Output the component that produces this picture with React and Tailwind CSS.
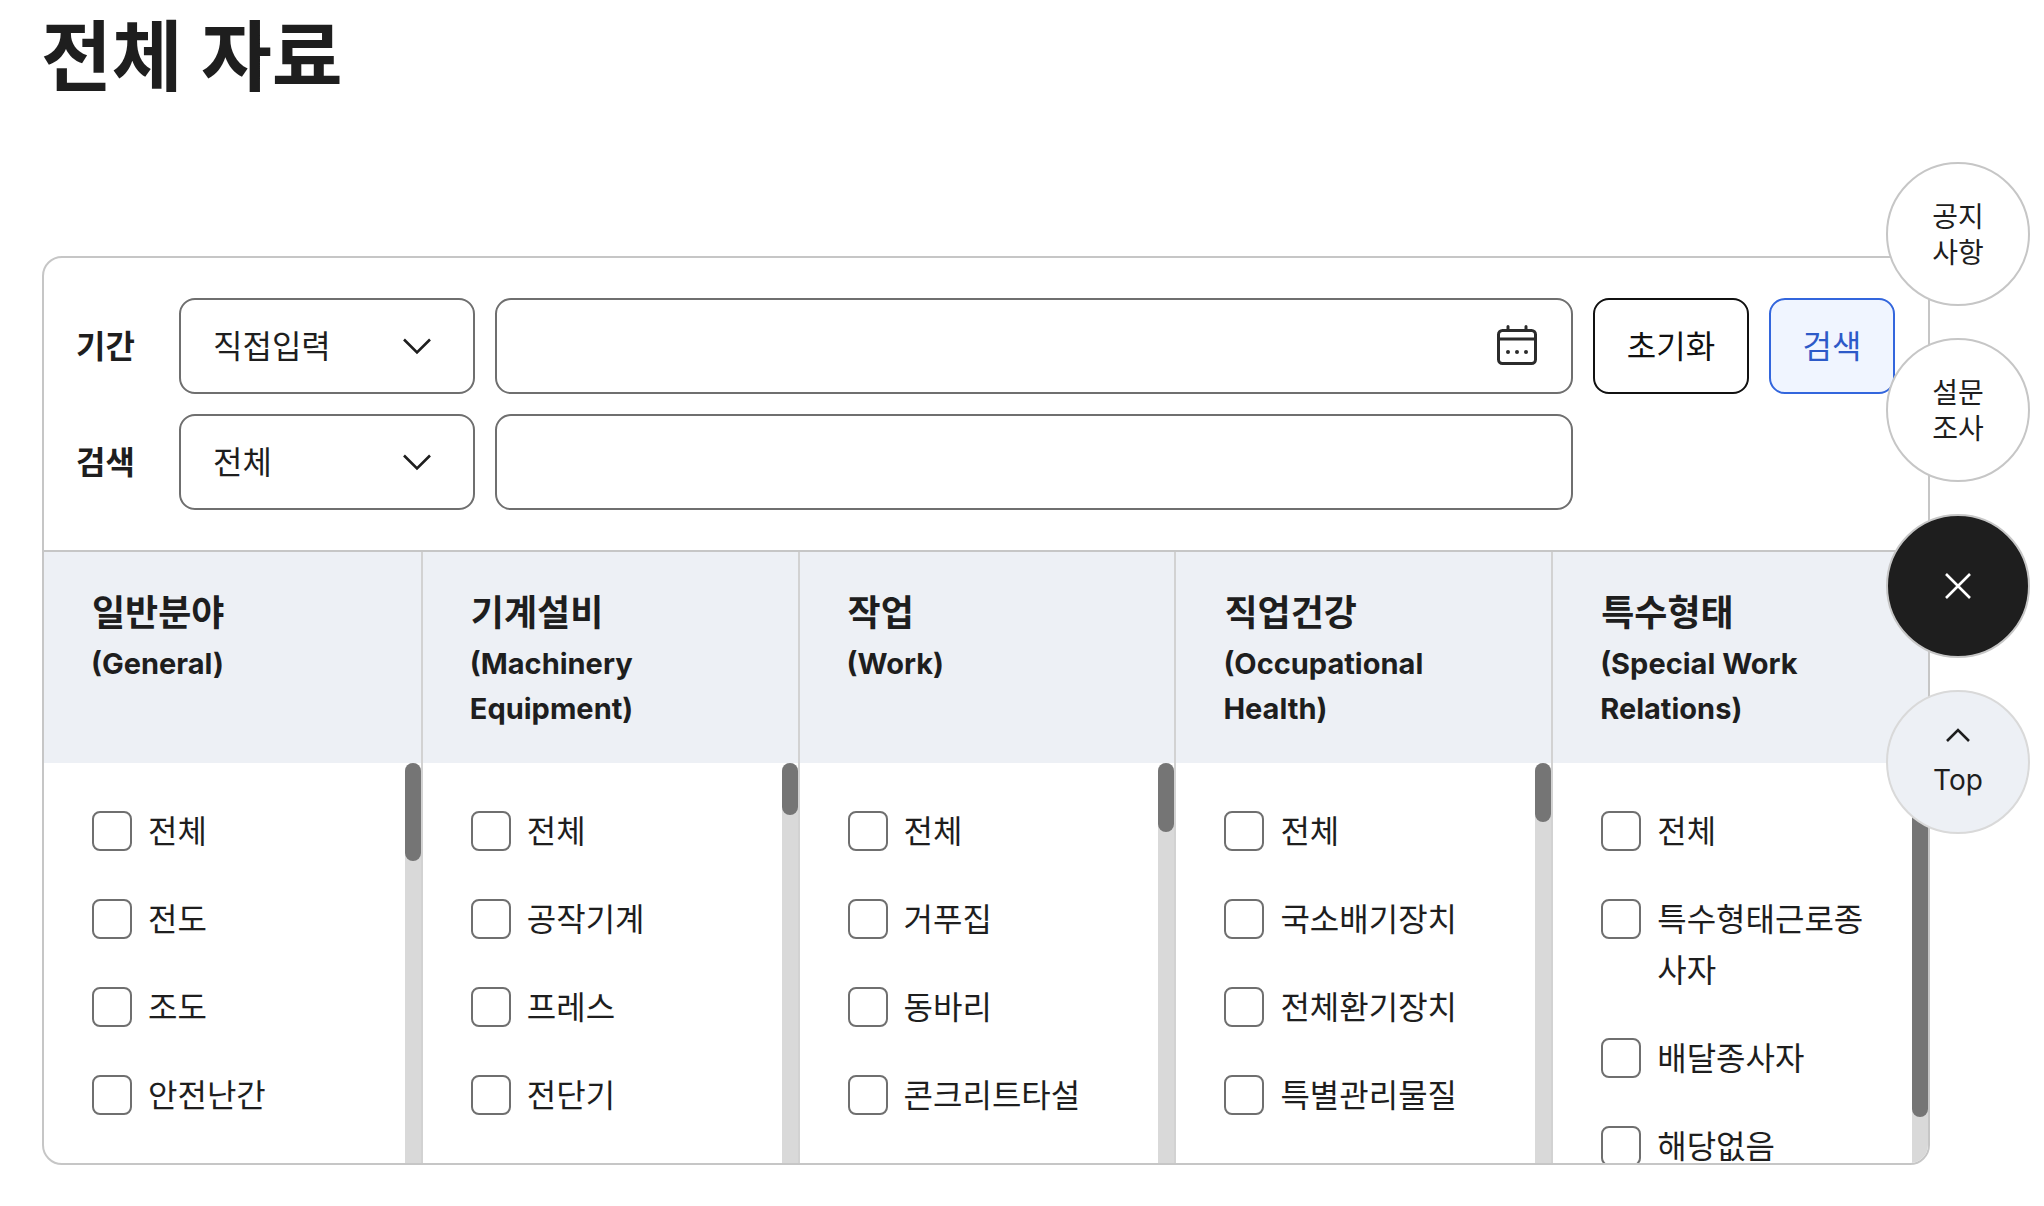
import React from "react";

const columns = [
  { t: "일반분야", s: "(General)", items: ["전체", "전도", "조도", "안전난간"], thumb: "h-[98px]" },
  { t: "기계설비", s: "(Machinery Equipment)", items: ["전체", "공작기계", "프레스", "전단기"], thumb: "h-[52px]" },
  { t: "작업", s: "(Work)", items: ["전체", "거푸집", "동바리", "콘크리트타설"], thumb: "h-[69px]" },
  { t: "직업건강", s: "(Occupational Health)", items: ["전체", "국소배기장치", "전체환기장치", "특별관리물질"], thumb: "h-[59px]" },
  { t: "특수형태", s: "(Special Work Relations)", items: ["전체", "특수형태근로종사자", "배달종사자", "해당없음"], thumb: "h-[354px]" },
];

function Chevron() {
  return (
    <svg width="30" height="18" viewBox="0 0 30 18" fill="none" stroke="#1e1e1e" strokeWidth="2.6" className="shrink-0">
      <path d="M2 2.5 L15 15.5 L28 2.5" />
    </svg>
  );
}

function Select({ label }) {
  return (
    <div className="flex h-[96px] w-[296px] shrink-0 items-center justify-between rounded-[16px] border-2 border-[#6f6f6f] bg-white pl-[32px] pr-[41px] text-[32px] text-[#1e1e1e]">
      <span className="pt-[2px]">{label}</span>
      <Chevron />
    </div>
  );
}

function Column({ col, first }) {
  return (
    <div className={`relative flex min-w-0 flex-col ${first ? "" : "border-l-2 border-[#d2d2d2]"}`}>
      <div className="h-[211px] shrink-0 bg-[#edf0f5] pl-[48px] pr-[40px] pt-[33px] text-[#1e1e1e]">
        <div className="text-[36px] font-bold leading-[56px]">{col.t}</div>
        <div className="-ml-[1px] text-[29px] font-bold leading-[45px]">{col.s}</div>
      </div>
      <div className="relative min-h-0 flex-1 overflow-hidden">
        <ul className="flex flex-col gap-[37px] pl-[48px] pr-[46px] pt-[43px]">
          {col.items.map((it) => (
            <li key={it} className="flex items-start gap-[16px]">
              <span className="mt-[5px] h-[40px] w-[40px] shrink-0 rounded-[8px] border-2 border-[#6f6f6f] bg-white" />
              <span className="text-[32px] leading-[51px] text-[#1e1e1e]">{it}</span>
            </li>
          ))}
        </ul>
        <div className="absolute bottom-0 right-0 top-0 w-[16px] rounded-full bg-[#d9d9d9]">
          <div className={`w-[16px] rounded-full bg-[#757575] ${col.thumb}`} />
        </div>
      </div>
    </div>
  );
}

function Circle({ children, className }) {
  return (
    <button className={`flex h-[144px] w-[144px] flex-col items-center justify-center rounded-full border-2 text-[28px] leading-[36px] ${className}`}>
      {children}
    </button>
  );
}

export default function App() {
  return (
    <div className="relative h-[1206px] overflow-hidden bg-white pl-[42px] font-['Inter','Noto_Sans_CJK_KR',sans-serif] text-[#1e1e1e]">
      <h1 className="-ml-[1px] h-[256px] pt-[9px] text-[77px] font-bold leading-[96px]">전체 자료</h1>
      <div className="flex h-[909px] w-[1888px] flex-col overflow-hidden rounded-[20px] border-2 border-[#c6c6c6]">
        <div className="flex shrink-0 flex-col gap-[20px] border-b-2 border-[#c6c6c6] pb-[40px] pl-[32px] pt-[40px]">
          <div className="flex items-center gap-[20px]">
            <div className="-mr-[20px] w-[103px] shrink-0 pt-[2px] text-[32px] font-bold">기간</div>
            <Select label="직접입력" />
            <div className="flex h-[96px] w-[1078px] shrink-0 items-center justify-end rounded-[16px] border-2 border-[#6f6f6f] bg-white pr-[33px]">
              <svg width="42" height="42" viewBox="0 0 42 42" fill="none" stroke="#2b2b2b" strokeWidth="3">
                <rect x="2.5" y="5.5" width="37" height="33" rx="4" />
                <path d="M2.5 14 H39.5" />
                <path d="M12 1.5 V5 M30 1.5 V5" strokeLinecap="round" />
                <circle cx="12" cy="27" r="2" fill="#2b2b2b" stroke="none" />
                <circle cx="21" cy="27" r="2" fill="#2b2b2b" stroke="none" />
                <circle cx="30" cy="27" r="2" fill="#2b2b2b" stroke="none" />
              </svg>
            </div>
            <button className="h-[96px] w-[156px] shrink-0 rounded-[16px] border-2 border-[#111111] bg-white pt-[2px] text-[32px] text-[#111111]">초기화</button>
            <button className="h-[96px] w-[126px] shrink-0 rounded-[16px] border-2 border-[#3366dd] bg-[#f0f5ff] pt-[2px] text-[32px] text-[#2d5ac8]">검색</button>
          </div>
          <div className="flex items-center gap-[20px]">
            <div className="-mr-[20px] w-[103px] shrink-0 pt-[2px] text-[32px] font-bold">검색</div>
            <Select label="전체" />
            <div className="h-[96px] w-[1078px] shrink-0 rounded-[16px] border-2 border-[#6f6f6f] bg-white" />
          </div>
        </div>
        <div className="grid min-h-0 flex-1 grid-cols-5">
          {columns.map((c, i) => (
            <Column key={c.t} col={c} first={i === 0} />
          ))}
        </div>
      </div>

      <div className="absolute right-[14px] top-[162px] flex flex-col gap-[32px]">
        <Circle className="border-[#c6c6c6] bg-white pt-[2px]"><span>공지</span><span>사항</span></Circle>
        <Circle className="border-[#c6c6c6] bg-white pt-[2px]"><span>설문</span><span>조사</span></Circle>
        <Circle className="border-[#c6c6c6] bg-[#1e1e1e]">
          <svg width="30" height="30" viewBox="0 0 30 30" fill="none" stroke="#ffffff" strokeWidth="2.6"><path d="M3 3 L27 27 M27 3 L3 27" /></svg>
        </Circle>
        <Circle className="border-[#d9d9d9] bg-[#edf0f5]">
          <svg width="26" height="16" viewBox="0 0 26 16" fill="none" stroke="#1e1e1e" strokeWidth="2.6" className="mb-[19px]"><path d="M2 14 L13 3 L24 14" /></svg>
          <span>Top</span>
        </Circle>
      </div>
    </div>
  );
}
